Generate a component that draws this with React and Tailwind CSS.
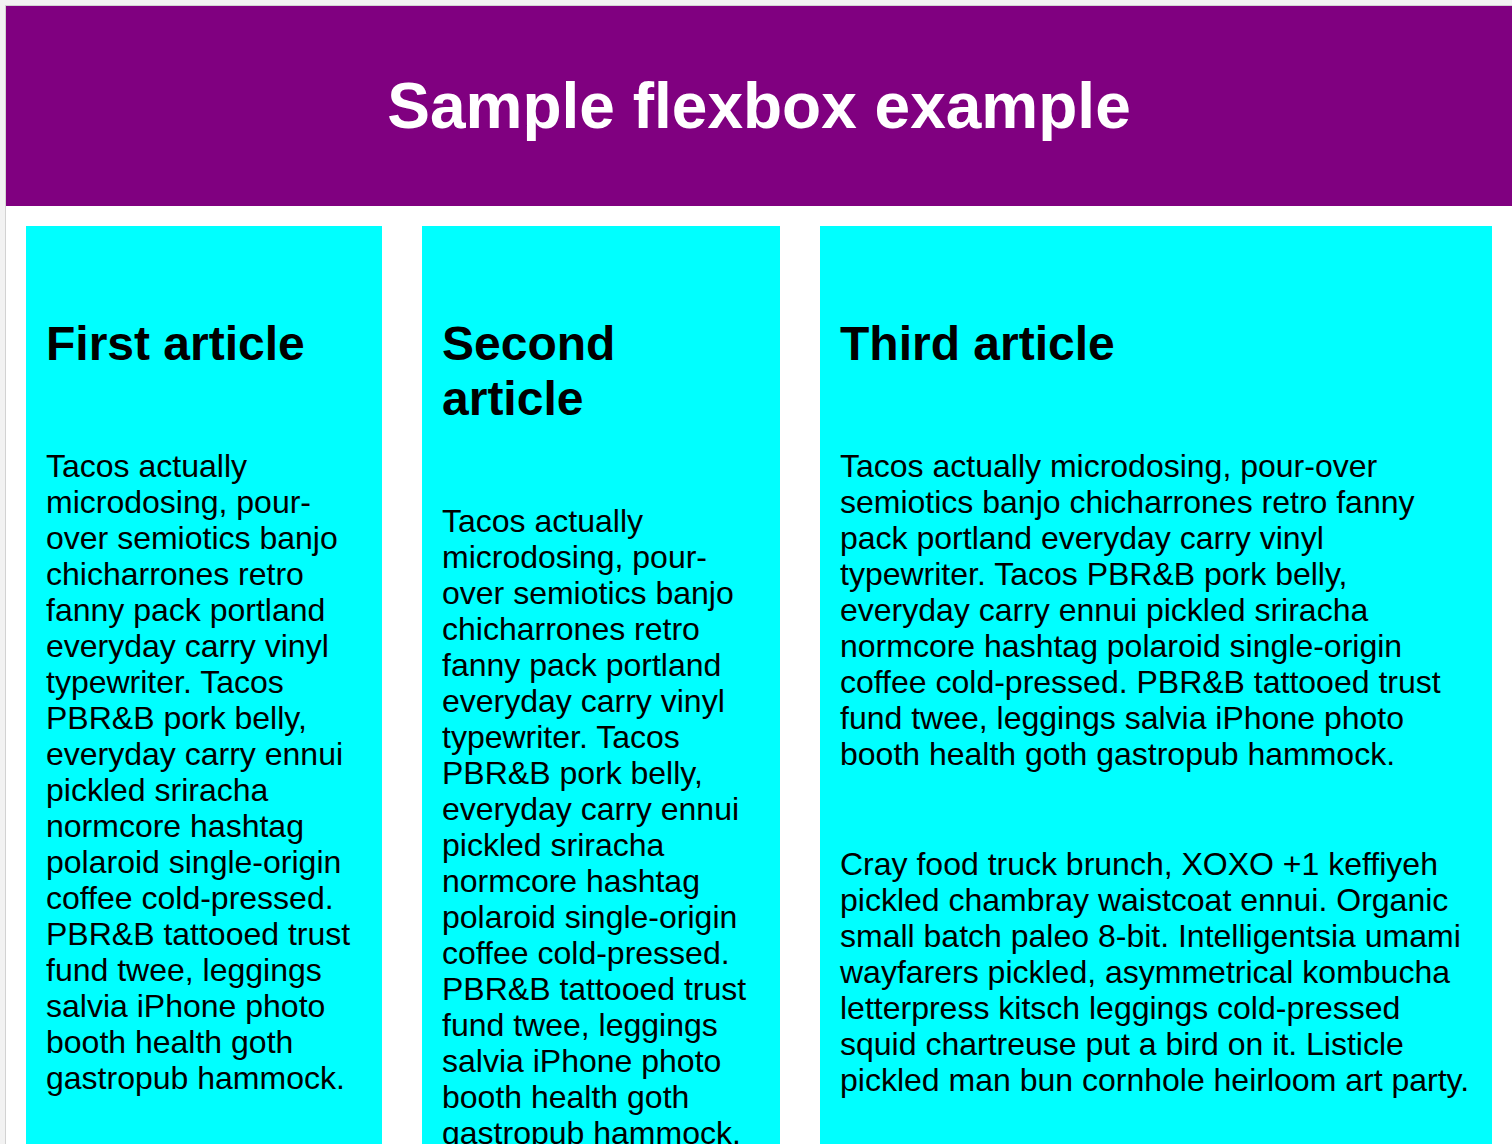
import React from 'react';

const tacos =
  'Tacos actually microdosing, pour-over semiotics banjo chicharrones retro fanny pack portland everyday carry vinyl typewriter. Tacos PBR&B pork belly, everyday carry ennui pickled sriracha normcore hashtag polaroid single-origin coffee cold-pressed. PBR&B tattooed trust fund twee, leggings salvia iPhone photo booth health goth gastropub hammock.';

const cray =
  'Cray food truck brunch, XOXO +1 keffiyeh pickled chambray waistcoat ennui. Organic small batch paleo 8-bit. Intelligentsia umami wayfarers pickled, asymmetrical kombucha letterpress kitsch leggings cold-pressed squid chartreuse put a bird on it. Listicle pickled man bun cornhole heirloom art party.';

function Article({ title, paragraphs, size }) {
  return (
    <article className={`${size} m-5 p-5 bg-[#00ffff]`}>
      <h2 className="mt-[70px] mb-[77px] text-[48px] leading-[55px] font-bold">{title}</h2>
      {paragraphs.map((p, i) => (
        <p key={i} className="my-[74px] text-[32px] leading-[36px]">
          {p}
        </p>
      ))}
    </article>
  );
}

export default function App() {
  return (
    <div
      className="min-h-screen bg-[#f2f2f2] pl-[5px] pt-[5px] text-black"
      style={{ fontFamily: '"Liberation Sans", Arial, sans-serif' }}
    >
      <div className="border-l border-t border-[#d2d2d2] bg-white">
        <header className="h-[200px] bg-[#800080]">
          <h1 className="m-0 text-center text-[64px] leading-[200px] font-bold text-white">
            Sample flexbox example
          </h1>
        </header>

        <section className="flex">
          <Article size="w-[356px] flex-none" title="First article" paragraphs={[tacos]} />
          <Article size="w-[358px] flex-none" title="Second article" paragraphs={[tacos]} />
          <Article size="flex-1 min-w-0" title="Third article" paragraphs={[tacos, cray]} />
        </section>
      </div>
    </div>
  );
}
